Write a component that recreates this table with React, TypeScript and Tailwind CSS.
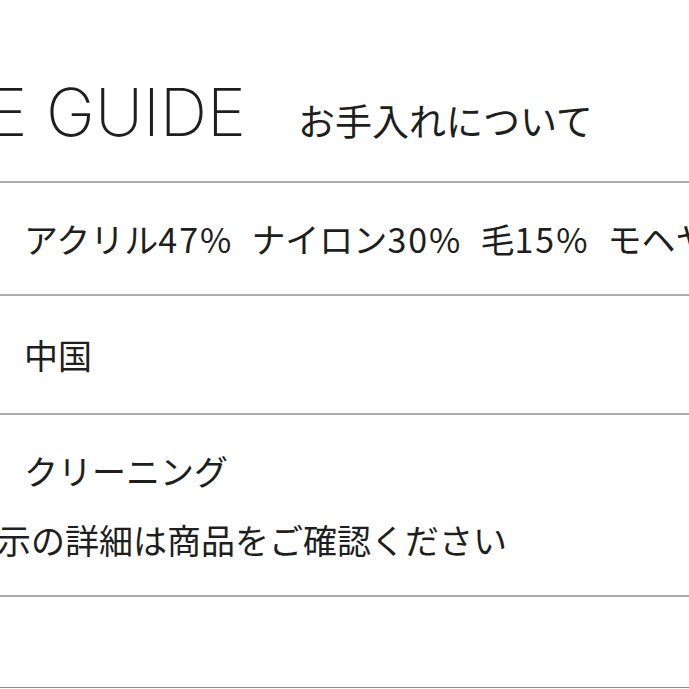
export default function App() {
    return (
        <div className="w-[689px] h-[689px] overflow-hidden bg-white text-[#1e1e1e]" style={{ fontFamily: '"Noto Sans CJK JP", sans-serif' }}>
            {/* Title */}
            <div className="h-[181px] flex items-baseline whitespace-nowrap pt-[79px]">
                <span className="-ml-[143px] text-[66px] leading-none font-extralight" style={{ fontFamily: 'Inter, "Noto Sans", sans-serif' }}>
                    CARE GUIDE
                </span>
                <span className="ml-[52px] text-[37px] leading-none">お手入れについて</span>
            </div>

            {/* Material */}
            <div className="h-[113px] border-t-2 border-[#acacac] flex items-center gap-[18px] pl-6 whitespace-nowrap text-[34px] leading-none">
                <span>アクリル<span className="tracking-[2px]">47%</span></span>
                <span>ナイロン<span className="tracking-[2px]">30%</span></span>
                <span>毛<span className="tracking-[2px]">15%</span></span>
                <span>モヘヤ<span className="tracking-[2px]">5%</span></span>
                <span>その他<span className="tracking-[2px]">3%</span></span>
            </div>

            {/* Origin */}
            <div className="h-[119px] border-t-2 border-[#acacac] flex items-center pl-6">
                <span className="text-[34px] leading-none">中国</span>
            </div>

            {/* Care */}
            <div className="h-[182px] border-t-2 border-[#acacac] flex flex-col justify-center gap-[35px] whitespace-nowrap text-[34px] leading-none">
                <div className="pl-6">クリーニング</div>
                <div className="-ml-[37px]">表示の詳細は商品をご確認ください</div>
            </div>

            <div className="h-[92px] border-t-2 border-[#acacac]"></div>
            <div className="border-t border-[#8a8a8a]"></div>
        </div>
    );
}
